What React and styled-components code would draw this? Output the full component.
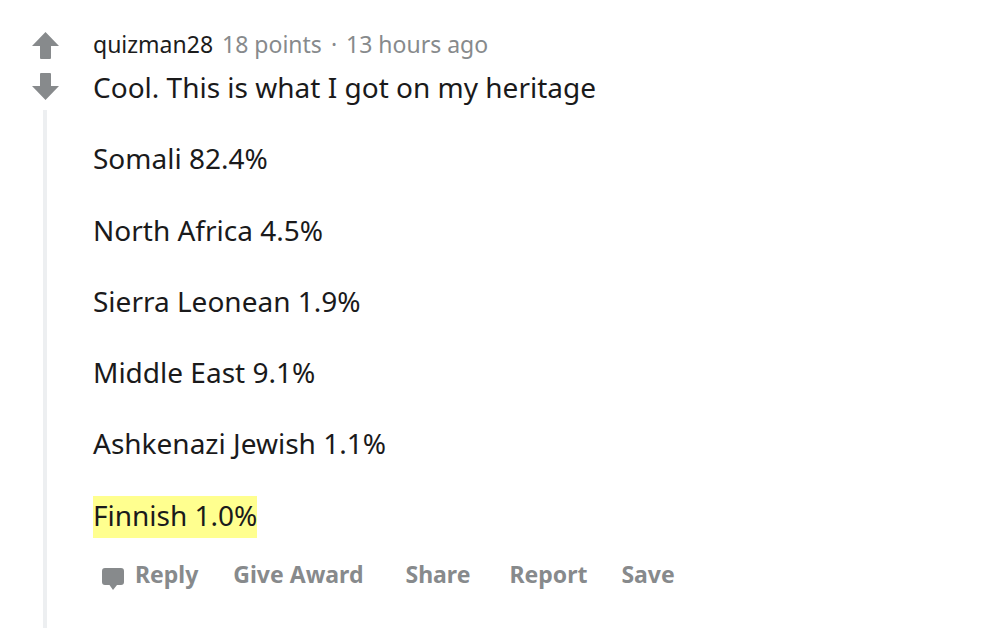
import React from 'react';
import styled, { createGlobalStyle } from 'styled-components';

const GlobalStyle = createGlobalStyle`
  html, body {
    margin: 0;
    padding: 0;
    background: #fff;
  }
  body {
    font-family: "Noto Sans", "Open Sans", sans-serif;
  }
`;

const Comment = styled.div`
  display: flex;
  width: 986px;
  height: 628px;
  overflow: hidden;
  box-sizing: border-box;
  padding: 32px 0 0 32px;
`;

const VoteColumn = styled.div`
  display: flex;
  flex-direction: column;
  width: 27px;
  flex-shrink: 0;
`;

const Arrow = styled.svg`
  display: block;
  width: 27px;
  height: 27px;
  margin-bottom: ${(props) => props.$gap || 0}px;
  fill: #878a8c;
`;

const ThreadLine = styled.div`
  flex: 1;
  width: 4px;
  margin: 10px 0 0 11px;
  background: #edeff1;
`;

const Content = styled.div`
  margin-left: 34px;
  display: flex;
  flex-direction: column;
`;

const Meta = styled.div`
  display: flex;
  align-items: baseline;
  height: 24px;
  margin-bottom: 10px;
  font-size: 23px;
  line-height: 24px;
  color: #878a8c;
`;

const Author = styled.span`
  color: #1c1c1c;
  margin-right: 9px;
`;

const Dot = styled.span`
  margin: 0 9px;
`;

const Paragraph = styled.p`
  margin: 0 0 ${(props) => (props.$last ? 0 : 29.3)}px;
  font-size: 28px;
  line-height: 42px;
  color: #1a1a1b;
`;

const Highlight = styled.span`
  display: block;
  width: fit-content;
  margin-top: 2px;
  padding-bottom: 4px;
  line-height: 38px;
  background: #ffff8f;
`;

const Actions = styled.div`
  display: flex;
  align-items: center;
  margin-top: 20px;
  margin-left: 9px;
  font-size: 23px;
  font-weight: 700;
  color: #878a8c;
`;

const Action = styled.span`
  display: flex;
  align-items: center;
  margin-right: ${(props) => props.$gap}px;
  white-space: nowrap;
`;

const ReplyIcon = styled.svg`
  width: 22px;
  height: 22px;
  margin: 7px 11px -3px 0;
  fill: #878a8c;
`;

const rows = [
  'Cool. This is what I got on my heritage',
  'Somali 82.4%',
  'North Africa 4.5%',
  'Sierra Leonean 1.9%',
  'Middle East 9.1%',
  'Ashkenazi Jewish 1.1%',
];

const actions = [
  { label: 'Give Award', gap: 42 },
  { label: 'Share', gap: 39 },
  { label: 'Report', gap: 34 },
  { label: 'Save', gap: 0 },
];

const App = () => (
  <>
    <GlobalStyle />
    <Comment>
      <VoteColumn>
        <Arrow viewBox="0 0 27 27" $gap={14}>
          <path d="M13.5 0 L27 14 L19 14 L19 26 Q19 27 18 27 L9 27 Q8 27 8 26 L8 14 L0 14 Z" />
        </Arrow>
        <Arrow viewBox="0 0 27 27">
          <path d="M13.5 27 L27 13 L19 13 L19 1 Q19 0 18 0 L9 0 Q8 0 8 1 L8 13 L0 13 Z" />
        </Arrow>
        <ThreadLine />
      </VoteColumn>
      <Content>
        <Meta>
          <Author>quizman28</Author>
          <span>18 points</span>
          <Dot>·</Dot>
          <span>13 hours ago</span>
        </Meta>
        {rows.map((text) => (
          <Paragraph key={text}>{text}</Paragraph>
        ))}
        <Paragraph $last>
          <Highlight>Finnish 1.0%</Highlight>
        </Paragraph>
        <Actions>
          <Action $gap={35}>
            <ReplyIcon viewBox="0 0 22 22">
              <path d="M3 0 H19 Q22 0 22 3 V14 Q22 17 19 17 H15 L11 22 L7.5 17 H3 Q0 17 0 14 V3 Q0 0 3 0 Z" />
            </ReplyIcon>
            Reply
          </Action>
          {actions.map((item) => (
            <Action key={item.label} $gap={item.gap}>
              {item.label}
            </Action>
          ))}
        </Actions>
      </Content>
    </Comment>
  </>
);

export default App;
